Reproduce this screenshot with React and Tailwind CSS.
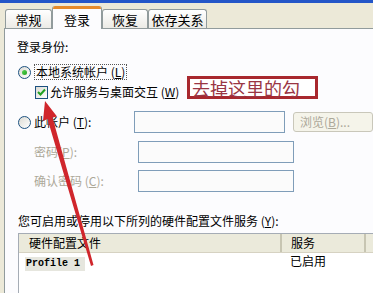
import React from "react";

const cjk = { fontFamily: '"Noto Sans CJK SC", "Liberation Sans", sans-serif' };

function Key({ k }) {
  return (
    <span>
      (<span className="underline">{k}</span>)
    </span>
  );
}

function Radio({ checked }) {
  return (
    <span className="relative inline-flex h-[13px] w-[13px] shrink-0 items-center justify-center rounded-full border border-[#1C5180] bg-gradient-to-br from-[#DCDBD4] to-[#FFFFFF]">
      {checked && (
        <span className="h-[5px] w-[5px] rounded-full bg-gradient-to-br from-[#55D551] to-[#21A121]" />
      )}
    </span>
  );
}

function Checkbox() {
  return (
    <span className="inline-flex h-[13px] w-[13px] shrink-0 items-center justify-center border border-[#1C5180] bg-gradient-to-br from-[#DCDBD4] to-[#FFFFFF]">
      <svg width="9" height="9" viewBox="0 0 9 9">
        <path d="M1 4 L3.5 6.5 L8 1.5" fill="none" stroke="#21A121" strokeWidth="2" />
      </svg>
    </span>
  );
}

function Tab({ label, selected, w }) {
  if (selected) {
    return (
      <div
        className={`relative z-10 -mb-px flex h-[23px] flex-col overflow-hidden rounded-t-[3px] border-x border-[#919B9C] bg-[#FCFCFE] ${w}`}
      >
        <div className="h-[3px] bg-[#E68B2C]" />
        <div className="flex flex-1 items-center justify-center text-[13px] leading-none text-black">{label}</div>
      </div>
    );
  }
  return (
    <div
      className={`flex h-[19px] items-center justify-center rounded-t-[3px] border border-b-0 border-[#919B9C] bg-gradient-to-b from-[#FFFFFF] to-[#ECEBE6] text-[13px] leading-none text-black ${w}`}
    >
      {label}
    </div>
  );
}

export default function App() {
  return (
    <div className="relative flex h-[293px] w-[373px] flex-col overflow-hidden bg-[#ECE9D8]" style={cjk}>
      <div className="h-[3px] bg-[#2456C8]" />

      {/* tabs */}
      <div className="flex h-[25px] items-end pl-[5px]">
        <Tab label="常规" w="w-[47px]" />
        <Tab label="登录" selected w="w-[50px]" />
        <Tab label="恢复" w="w-[46px]" />
        <Tab label="依存关系" w="w-[59px]" />
      </div>

      {/* panel */}
      <div className="ml-[4px] flex-1 overflow-hidden border-l border-t border-[#919B9C] bg-[#FCFCFE] pl-[12px] text-[12px] text-black">
        <div className="mt-[10px] h-[16px] leading-[16px]">登录身份:</div>

        <div className="mt-[9px] flex h-[16px] items-center gap-[3px] pl-[1px]">
          <Radio checked />
          <span className="border border-dotted border-[#555] px-[1px] leading-[14px]">
            本地系统帐户 <Key k="L" />
          </span>
        </div>

        <div className="mt-[4px] flex h-[16px] items-center gap-[2px] pl-[18px]">
          <Checkbox />
          <span className="leading-[16px]">
            允许服务与桌面交互 <Key k="W" />
          </span>
        </div>

        <div className="mt-[11px] flex h-[22px] items-center">
          <div className="flex w-[121px] items-center gap-[3px] pl-[1px]">
            <Radio />
            <span>
              此帐户 <Key k="T" />:
            </span>
          </div>
          <div className="h-[22px] w-[155px] border border-[#7F9DB9] bg-[#FBFBFB]" />
          <div className="ml-[8px] flex h-[20px] w-[80px] shrink-0 items-center rounded-[3px] border border-[#C9C7BA] bg-[#F5F4EA] pl-[6px] text-[#ACA899]">
            浏览 <Key k="B" />...
          </div>
        </div>

        <div className="mt-[8px] flex h-[22px] items-center">
          <div className="w-[121px] pl-[17px] text-[#ACA899]">
            密码(<span className="underline">P</span>):
          </div>
          <div className="h-[22px] w-[156px] border border-[#7F9DB9] bg-[#FBFBFB]" />
        </div>

        <div className="mt-[7px] flex h-[22px] items-center">
          <div className="w-[121px] pl-[17px] text-[#ACA899]">
            确认密码 <Key k="C" />:
          </div>
          <div className="h-[22px] w-[156px] border border-[#7F9DB9] bg-[#FBFBFB]" />
        </div>

        <div className="mt-[21px] h-[16px] leading-[16px] pl-[1px]">
          您可启用或停用以下所列的硬件配置文件服务 <Key k="Y" />:
        </div>

        {/* list */}
        <div className="ml-[1px] mt-[4px] h-[80px] w-[380px] border border-[#A5ACB5] bg-white">
          <div className="flex h-[19px] border-b border-[#D6D2C2] bg-[#EBEADB]">
            <div className="flex w-[263px] items-center border-r-2 border-[#C7C5B2] pl-[10px]">硬件配置文件</div>
            <div className="flex w-[84px] items-center border-r-2 border-[#C7C5B2] pl-[9px]">服务</div>
            <div className="flex-1" />
          </div>
          <div className="mt-[1px] flex h-[14px] items-center">
            <div className="w-[263px] pl-[6px]">
              <span
                className="inline-block w-[60px] bg-[#E6E6DE] pl-[1px] text-[10px] font-bold leading-[14px]"
                style={{ fontFamily: '"Liberation Mono", monospace' }}
              >
                Profile 1
              </span>
            </div>
            <div className="pl-[8px] leading-[14px]">已启用</div>
          </div>
        </div>
      </div>

      {/* annotation */}
      <div className="absolute left-[187px] top-[76px] flex h-[23px] w-[131px] items-center border-[3px] border-[#A8282E] bg-white pl-[2px] text-[18px] leading-none text-[#9A3644]">
        去掉这里的勾
      </div>
      <svg className="pointer-events-none absolute left-0 top-0" width="373" height="293">
        <polygon
          points="45,101 43,121 47.5,119 91,266 93.5,265 52.5,117.5 57,116.5"
          fill="#D0262C"
        />
      </svg>
    </div>
  );
}
